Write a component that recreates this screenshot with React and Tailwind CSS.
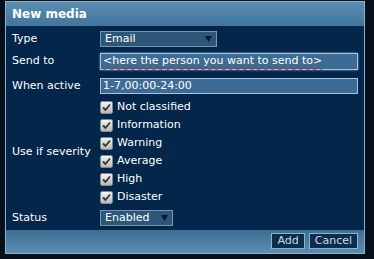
import React from "react";

const Check = () => (
  <span className="inline-flex items-center justify-center w-[13px] h-[13px] rounded-[2px] bg-gradient-to-b from-[#f4f4f4] to-[#b9b9b9] border border-[#7a8a96] mr-[4px]">
    <svg width="9" height="9" viewBox="0 0 9 9">
      <path d="M1 4.5 L3.5 7 L8 1.5" stroke="#333" strokeWidth="1.8" fill="none" />
    </svg>
  </span>
);

const Arrow = () => (
  <svg width="7" height="6" viewBox="0 0 7 6"><path d="M0 0 H7 L3.5 6 Z" fill="#0a1a2a" /></svg>
);

export default function App() {
  const sev = ["Not classified", "Information", "Warning", "Average", "High", "Disaster"];
  return (
    <div className="w-[374px] h-[259px] bg-[#06101a] pt-[1px] pl-[5px]" style={{ fontFamily: '"DejaVu Sans", Verdana, sans-serif' }}>
      <div className="w-[360px] h-[253px] border border-[#8fb2cc] bg-[#03264a] flex flex-col">
        <div className="h-[24px] bg-gradient-to-b from-[#5a8db0] to-[#40769c] flex items-center pl-[6px] text-white font-bold text-[12px]">New media</div>
        <div className="flex-1 text-white text-[11px] pt-[3px]">
          <div className="flex items-center h-[21px]">
            <div className="w-[94px] pl-[6px]">Type</div>
            <div className="w-[117px] h-[16px] bg-[#2e5678] border border-[#6f98b8] flex items-center justify-between px-[4px]">
              <span>Email</span><Arrow />
            </div>
          </div>
          <div className="flex items-center h-[24px]">
            <div className="w-[94px] pl-[6px]">Send to</div>
            <div className="w-[258px] h-[17px] bg-[#3c6c93] border border-[#a6c6e0] flex items-center px-[2px] shadow-[0_0_2px_#7fb0e0]">
              <span className="underline decoration-wavy decoration-[#a8303a] decoration-1 underline-offset-2">&lt;here the person you want to send to&gt;</span>
            </div>
          </div>
          <div className="flex items-center h-[25px]">
            <div className="w-[94px] pl-[6px]">When active</div>
            <div className="w-[258px] h-[16px] bg-[#3c6c93] border border-[#a6c6e0] flex items-center px-[2px]">
              <span>1-7,00:00-24:00</span>
            </div>
          </div>
          <div className="flex items-center">
            <div className="w-[94px] pl-[6px]">Use if severity</div>
            <div className="flex flex-col">
              {sev.map((s) => (
                <div key={s} className="flex items-center h-[18px]"><Check />{s}</div>
              ))}
            </div>
          </div>
          <div className="flex items-center h-[23px]">
            <div className="w-[94px] pl-[6px]">Status</div>
            <div className="w-[73px] h-[16px] bg-[#2e5678] border border-[#6f98b8] flex items-center justify-between px-[4px]">
              <span>Enabled</span><Arrow />
            </div>
          </div>
        </div>
        <div className="h-[24px] bg-gradient-to-b from-[#3c6f93] to-[#5a8eb2] flex items-center justify-end gap-[4px] pr-[6px]">
          <div className="h-[16px] px-[5px] border border-[#8fb2cc] bg-[#0c2d4d] text-[#c8dcec] text-[11px] flex items-center">Add</div>
          <div className="h-[16px] px-[5px] border border-[#8fb2cc] bg-[#0c2d4d] text-[#c8dcec] text-[11px] flex items-center">Cancel</div>
        </div>
      </div>
    </div>
  );
}
